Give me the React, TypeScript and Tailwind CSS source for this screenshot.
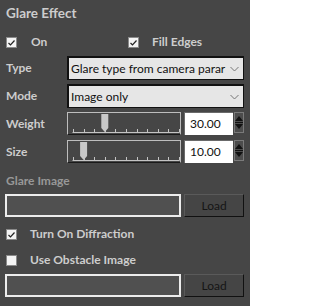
import React from "react";

function Check({ checked }: { checked: boolean }) {
  return (
    <div className="w-[11px] h-[11px] bg-[#f4f4f4] border border-[#8a8a8a] flex items-center justify-center shrink-0">
      {checked && (
        <svg width="9" height="9" viewBox="0 0 9 9">
          <path d="M1.5 5 L3.5 7 L7.5 2.5" stroke="#222" strokeWidth="1.2" fill="none" />
        </svg>
      )}
    </div>
  );
}

function Dropdown({ text }: { text: string }) {
  return (
    <div className="flex-1 h-[24px] bg-[#e6e6e6] border-t-2 border-l-2 border-b border-r border-[#111] flex items-center pl-[2px] pr-[4px] text-[#111] font-normal overflow-hidden">
      <span className="flex-1 whitespace-nowrap overflow-hidden">{text}</span>
      <svg width="9" height="6" viewBox="0 0 9 6" className="shrink-0 ml-[3px]">
        <path d="M0.5 1 L4.5 5 L8.5 1" stroke="#777" strokeWidth="1" fill="none" />
      </svg>
    </div>
  );
}

function Slider({ tick }: { tick: number }) {
  const ticks = Array.from({ length: 11 }, (_, i) => 5 + i * 10.6);
  const tx = 5 + tick * 10.6;
  return (
    <div className="w-[115px] h-[23px] border border-[#bdbdbd] border-b-[#1a1a1a] relative">
      <svg width="113" height="21" viewBox="0 0 113 21" className="absolute left-0 top-0">
        <line x1="4.5" y1="19.5" x2={ticks[10] + 0.5} y2="19.5" stroke="#c4c4c4" strokeWidth="1" />
        {ticks.map((x, i) => (
          <line key={i} x1={Math.round(x) + 0.5} y1="16" x2={Math.round(x) + 0.5} y2="19.5" stroke="#c4c4c4" strokeWidth="1" />
        ))}
        <polygon
          points={`${tx - 3.5},1 ${tx + 3.5},1 ${tx + 3.5},15 ${tx},19 ${tx - 3.5},15`}
          fill="#c8c8c8"
        />
      </svg>
    </div>
  );
}

function Spin({ value }: { value: string }) {
  return (
    <div className="flex items-start gap-[1px]">
      <div className="w-[49px] h-[23px] bg-white border-t border-l border-[#6a6a6a] flex items-center pl-[5px] text-[#111] font-normal">
        {value}
      </div>
      <div className="w-[10px] h-[21px] bg-[#4c4c4c] border border-[#7a7a7a] flex flex-col items-center justify-center gap-[1px]">
        <svg width="8" height="5" viewBox="0 0 8 5">
          <polygon points="0,5 8,5 4,0" fill="#111" />
        </svg>
        <div className="w-[8px] h-[1px] bg-[#111]" />
        <svg width="8" height="5" viewBox="0 0 8 5">
          <polygon points="0,0 8,0 4,5" fill="#111" />
        </svg>
      </div>
    </div>
  );
}

function FileRow() {
  return (
    <div className="flex items-center h-[23px] pl-[5px] -ml-[6px] gap-[3px]">
      <div className="w-[177px] h-[23px] bg-[#505050] border-2 border-[#ececec]" />
      <div className="w-[60px] h-[23px] bg-[#454545] border border-t-[#5a5a5a] border-l-[#5a5a5a] border-b-[#111] border-r-[#111] flex items-center justify-center text-[#151515] font-normal">
        Load
      </div>
    </div>
  );
}

export default function App() {
  return (
    <div className="w-[250px] h-[306px] bg-[#464646] px-[6px] text-[12px] leading-[16px] font-bold text-[#cdcdcd] font-['Lato','Liberation_Sans',sans-serif] overflow-hidden">
      <div className="h-[26px] flex items-center text-[13.5px]">Glare Effect</div>
      <div className="mt-[6px] h-[20px] flex items-center">
        <div className="w-[122px] flex items-center">
          <Check checked />
          <span className="ml-[14px]">On</span>
        </div>
        <Check checked />
        <span className="ml-[13px]">Fill Edges</span>
      </div>
      <div className="mt-[4px] h-[24px] flex items-center">
        <div className="w-[61px]">Type</div>
        <Dropdown text="Glare type from camera parar" />
      </div>
      <div className="mt-[4px] h-[24px] flex items-center">
        <div className="w-[61px]">Mode</div>
        <Dropdown text="Image only" />
      </div>
      <div className="mt-[4px] h-[23px] flex items-start">
        <div className="w-[61px] h-[23px] flex items-center">Weight</div>
        <Slider tick={3} />
        <div className="ml-[3px]">
          <Spin value="30.00" />
        </div>
      </div>
      <div className="mt-[5px] h-[23px] flex items-start">
        <div className="w-[61px] h-[23px] flex items-center">Size</div>
        <Slider tick={1} />
        <div className="ml-[3px]">
          <Spin value="10.00" />
        </div>
      </div>
      <div className="mt-[8px] h-[20px] flex items-center text-[#989898]">Glare Image</div>
      <div className="mt-[3px]">
        <FileRow />
      </div>
      <div className="mt-[7px] h-[20px] flex items-center">
        <Check checked />
        <span className="ml-[13px]">Turn On Diffraction</span>
      </div>
      <div className="mt-[6px] h-[20px] flex items-center">
        <Check checked={false} />
        <span className="ml-[13px]">Use Obstacle Image</span>
      </div>
      <div className="mt-[4px]">
        <FileRow />
      </div>
    </div>
  );
}
